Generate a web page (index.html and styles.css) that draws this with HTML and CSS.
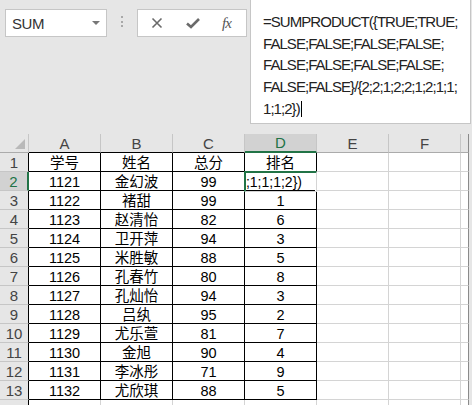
FILE: index.html
```html
<!DOCTYPE html>
<html>
<head>
<meta charset="utf-8">
<link rel="stylesheet" href="styles.css">
</head>
<body>
<div class="app">
  <div class="topbar">
    <div class="namebox">
      <span class="name">SUM</span>
      <span class="caret"></span>
    </div>
    <div class="grip"><i></i><i></i><i></i></div>
    <div class="fbtns">
      <svg class="ic" width="14" height="14" viewBox="0 0 14 14"><path d="M2.5 2.5 L11.5 11.5 M11.5 2.5 L2.5 11.5" stroke="#6a6a6a" stroke-width="1.6" fill="none"/></svg>
      <svg class="ic" width="16" height="14" viewBox="0 0 16 14"><path d="M2 7.5 L6 11 L14 3" stroke="#6a6a6a" stroke-width="2.6" fill="none"/></svg>
      <span class="fx">fx</span>
    </div>
    <div class="formula">
      <div>=SUMPRODUCT({TRUE;TRUE;</div>
      <div>FALSE;FALSE;FALSE;FALSE;</div>
      <div>FALSE;FALSE;FALSE;FALSE;</div>
      <div>FALSE;FALSE}/{2;2;1;2;2;1;2;1;1;</div>
      <div>1;1;2})<span class="cursor"></span></div>
    </div>
  </div>

  <div class="sheet">
    <div class="corner"><span class="tri"></span></div>
    <div class="ch ct">A</div><div class="ch ct">B</div><div class="ch ct">C</div><div class="ch sel">D</div><div class="ch">E</div><div class="ch">F</div><div class="ch chg"></div>

    <div class="rh">1</div><div class="t">学号</div><div class="t">姓名</div><div class="t">总分</div><div class="t">排名</div><div class="c"></div><div class="c"></div><div class="c g"></div>
    <div class="rh sel">2</div><div class="t">1121</div><div class="t">金幻波</div><div class="t">99</div><div class="t edit"><span>2;1;1;1;1;2})</span></div><div class="c"></div><div class="c"></div><div class="c g"></div>
    <div class="rh">3</div><div class="t">1122</div><div class="t">褚甜</div><div class="t">99</div><div class="t">1</div><div class="c"></div><div class="c"></div><div class="c g"></div>
    <div class="rh">4</div><div class="t">1123</div><div class="t">赵清怡</div><div class="t">82</div><div class="t">6</div><div class="c"></div><div class="c"></div><div class="c g"></div>
    <div class="rh">5</div><div class="t">1124</div><div class="t">卫开萍</div><div class="t">94</div><div class="t">3</div><div class="c"></div><div class="c"></div><div class="c g"></div>
    <div class="rh">6</div><div class="t">1125</div><div class="t">米胜敏</div><div class="t">88</div><div class="t">5</div><div class="c"></div><div class="c"></div><div class="c g"></div>
    <div class="rh">7</div><div class="t">1126</div><div class="t">孔春竹</div><div class="t">80</div><div class="t">8</div><div class="c"></div><div class="c"></div><div class="c g"></div>
    <div class="rh">8</div><div class="t">1127</div><div class="t">孔灿怡</div><div class="t">94</div><div class="t">3</div><div class="c"></div><div class="c"></div><div class="c g"></div>
    <div class="rh">9</div><div class="t">1128</div><div class="t">吕纨</div><div class="t">95</div><div class="t">2</div><div class="c"></div><div class="c"></div><div class="c g"></div>
    <div class="rh">10</div><div class="t">1129</div><div class="t">尤乐萱</div><div class="t">81</div><div class="t">7</div><div class="c"></div><div class="c"></div><div class="c g"></div>
    <div class="rh">11</div><div class="t">1130</div><div class="t">金旭</div><div class="t">90</div><div class="t">4</div><div class="c"></div><div class="c"></div><div class="c g"></div>
    <div class="rh">12</div><div class="t">1131</div><div class="t">李冰彤</div><div class="t">71</div><div class="t">9</div><div class="c"></div><div class="c"></div><div class="c g"></div>
    <div class="rh">13</div><div class="t">1132</div><div class="t">尤欣琪</div><div class="t">88</div><div class="t">5</div><div class="c"></div><div class="c"></div><div class="c g"></div>
    <div class="rh"></div><div class="c"></div><div class="c"></div><div class="c"></div><div class="c"></div><div class="c"></div><div class="c"></div><div class="c g"></div>

    <div class="selbox"><span class="handle"></span></div>
  </div>
</div>
</body>
</html>
```

FILE: styles.css
```css
* { box-sizing: border-box; }
html, body { margin: 0; padding: 0; }
body {
  width: 472px;
  height: 405px;
  overflow: hidden;
  background: #e6e6e6;
  font-family: "Liberation Sans", Arial, "Noto Sans CJK SC", sans-serif;
}
.app { width: 472px; height: 405px; overflow: hidden; }

.topbar {
  display: flex;
  align-items: flex-start;
  height: 124px;
  padding-left: 5px;
}
.namebox {
  margin-top: 9px;
  width: 102px;
  height: 28px;
  background: #fff;
  border: 1px solid #c6c6c6;
  display: flex;
  align-items: center;
  justify-content: space-between;
  padding: 0 6px 0 6px;
}
.name { font-size: 15px; color: #333; letter-spacing: -0.4px; }
.caret {
  width: 0; height: 0;
  border-left: 4px solid transparent;
  border-right: 4px solid transparent;
  border-top: 4px solid #777;
}
.grip {
  margin-top: 16px;
  width: 30px;
  display: flex;
  flex-direction: column;
  align-items: center;
  gap: 2.5px;
}
.grip i { display: block; width: 2px; height: 2px; background: #a8a8a8; }
.fbtns {
  margin-top: 9px;
  width: 110px;
  height: 28px;
  background: #fff;
  border: 1px solid #c6c6c6;
  display: flex;
  align-items: center;
  padding-left: 12px;
  gap: 21px;
}
.fx {
  font-family: "Liberation Serif", serif;
  font-style: italic;
  font-size: 15px;
  color: #555;
  letter-spacing: -1px;
}
.formula {
  margin-left: 3px;
  margin-top: -1px;
  width: 221px;
  height: 125px;
  background: #fff;
  border: 1px solid #c6c6c6;
  padding: 11px 0 0 12px;
  font-size: 15px;
  line-height: 21.7px;
  letter-spacing: -0.95px;
  color: #222;
  white-space: nowrap;
}
.cursor {
  display: inline-block;
  width: 1px;
  height: 16px;
  background: #000;
  vertical-align: -3px;
  margin-left: 1px;
}

.sheet {
  position: relative;
  margin-top: 10px;
  display: grid;
  grid-template-columns: 29px repeat(6, 72px) 8px;
  grid-auto-rows: 19px;
  width: 469px;
}
.sheet > div {
  border-right: 1px solid #d4d4d4;
  border-bottom: 1px solid #d4d4d4;
  background: #fff;
  display: flex;
  align-items: center;
  justify-content: center;
  font-size: 14.5px;
  line-height: 18px;
  padding-top: 2px;
  color: #000;
  white-space: nowrap;
  overflow: hidden;
}
.sheet > .corner {
  background: #e6e6e6;
  border-right: 1px solid #c6c6c6;
  border-bottom: 1px solid #ababab;
  position: relative;
}
.tri {
  position: absolute;
  right: 3px;
  bottom: 3px;
  width: 0; height: 0;
  border-left: 10px solid transparent;
  border-bottom: 10px solid #b9b9b9;
}
.sheet > .ch {
  background: #e6e6e6;
  border-right: 1px solid #c6c6c6;
  border-bottom: 1px solid #ababab;
  color: #444;
  font-size: 15px;
  padding-top: 1px;
}
.sheet > .ch.ct { border-bottom-color: #000; }
.sheet > .ch.sel {
  background: #d2d2d2;
  color: #217346;
  border-bottom: 2px solid #217346;
}
.sheet > .ch.chg { border-right: 1px solid #8a8a8a; }
.sheet > .rh {
  background: #e6e6e6;
  border-right: 1px solid #000;
  border-bottom: 1px solid #c6c6c6;
  color: #444;
  font-size: 15px;
}
.sheet > .rh.sel {
  background: #d2d2d2;
  color: #217346;
  border-right: 2px solid #217346;
}
.sheet > .t {
  border-right-color: #000;
  border-bottom-color: #000;
}
.sheet > .g { border-right: 1px solid #8a8a8a; }
.sheet > .edit {
  justify-content: flex-end;
  padding-right: 14px;
  font-size: 14px;
}
.edit span { flex-shrink: 0; }

.selbox {
  position: absolute;
  left: 244px;
  top: 37px;
  width: 73px;
  height: 21px;
  border: 2px solid #217346;
  pointer-events: none;
  background: transparent !important;
}
.handle {
  position: absolute;
  right: -5px;
  bottom: -5px;
  width: 6px;
  height: 6px;
  background: #217346;
  border: 1px solid #fff;
}
```
